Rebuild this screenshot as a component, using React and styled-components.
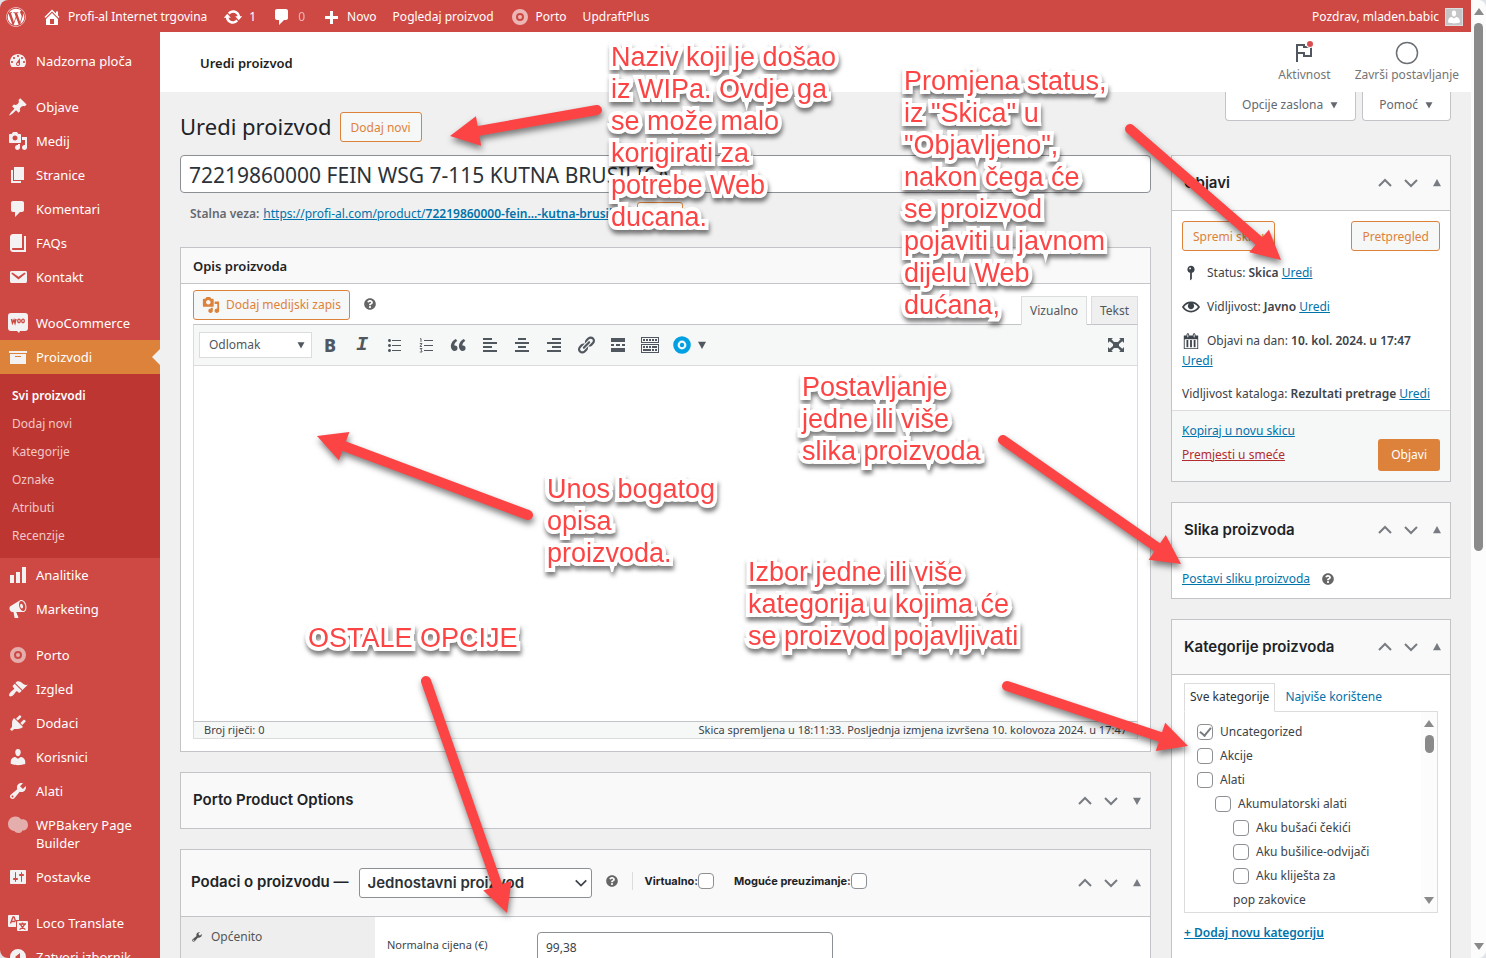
import React, { useState } from "react";
import styled, { createGlobalStyle, css } from "styled-components";
import { FaQuestionCircle, FaWordpress } from "react-icons/fa";

const paths = {
    dashboard: "M3.76 16h12.48c1.1-1.37 1.76-3.11 1.76-5 0-4.42-3.58-8-8-8s-8 3.58-8 8c0 1.89.66 3.63 1.76 5zM10 4c.55 0 1 .45 1 1s-.45 1-1 1-1-.45-1-1 .45-1 1-1zM6 6c.55 0 1 .45 1 1s-.45 1-1 1-1-.45-1-1 .45-1 1-1zm8 0c.55 0 1 .45 1 1s-.45 1-1 1-1-.45-1-1 .45-1 1-1zm-5.37 5.55L12 7v6c0 1.1-.9 2-2 2s-2-.9-2-2c0-.57.24-1.08.63-1.45zM4 10c.55 0 1 .45 1 1s-.45 1-1 1-1-.45-1-1 .45-1 1-1zm12 0c.55 0 1 .45 1 1s-.45 1-1 1-1-.45-1-1 .45-1 1-1zm-5 3c0-.55-.45-1-1-1s-1 .45-1 1 .45 1 1 1 1-.45 1-1z",
    pin: "M10.44 3.02l1.82-1.82 6.36 6.35-1.83 1.82c-1.05-.68-2.48-.57-3.41.36l-.75.75c-.92.93-1.04 2.35-.35 3.41l-1.83 1.82-2.41-2.41-2.8 2.79c-.42.42-3.38 2.71-3.8 2.29s1.86-3.39 2.28-3.81l2.79-2.79L4.1 9.36l1.83-1.82c1.05.69 2.48.57 3.4-.36l.75-.75c.93-.92 1.05-2.35.36-3.41z",
    media: "M13 11V4c0-.55-.45-1-1-1h-1.67L9 1H5L3.67 3H2c-.55 0-1 .45-1 1v7c0 .55.45 1 1 1h10c.55 0 1-.45 1-1zM7 4.5c1.38 0 2.5 1.12 2.5 2.5S8.38 9.5 7 9.5 4.5 8.38 4.5 7 5.62 4.5 7 4.5zM14 6h5v10.5c0 1.38-1.12 2.5-2.5 2.5S14 17.88 14 16.5s1.12-2.5 2.5-2.5c.17 0 .34.02.5.05V9h-3V6zm-4 8.05V13h2v3.5c0 1.38-1.12 2.5-2.5 2.5S7 17.88 7 16.5 8.12 14 9.5 14c.17 0 .34.02.5.05z",
    page: "M6 15V2h10v13H6zm-1 1h8v2H3V5h2v11z",
    comment: "M5 2h9c1.1 0 2 .9 2 2v7c0 1.1-.9 2-2 2h-2l-5 5v-5H5c-1.1 0-2-.9-2-2V4c0-1.1.9-2 2-2z",
    book: "M16 3h2v16H5c-1.66 0-3-1.34-3-3V4c0-1.66 1.34-3 3-3h9v14H5c-.55 0-1 .45-1 1s.45 1 1 1h11V3z",
    mail: "M3.87 4h13.25C18.37 4 19 4.59 19 5.79v8.42c0 1.19-.63 1.79-1.88 1.79H3.87c-1.25 0-1.88-.6-1.88-1.79V5.79c0-1.2.63-1.79 1.88-1.79zm6.62 8.6l6.74-5.53c.24-.2.43-.66.13-1.07-.29-.41-.82-.42-1.17-.17l-5.7 3.86L4.8 5.83c-.35-.25-.88-.24-1.17.17-.3.41-.11.87.13 1.07z",
    archive: "M19 4v2H1V4h18zM2 7h16v10H2V7zm11 3V9H7v1h6z",
    chart: "M18 18V2h-4v16h4zm-6 0V7H8v11h4zm-6 0v-8H2v8h4z",
    megaphone: "M18.15 5.94c.46 1.62.38 3.22-.02 4.48-.42 1.28-1.26 2.18-2.3 2.48-.16.06-.26.06-.4.06-.06.02-.12.02-.18.02-.06.02-.14.02-.22.02h-6.8l2.22 5.5c.02.14-.06.26-.14.34-.08.1-.24.16-.34.16H6.95c-.1 0-.26-.06-.34-.16-.08-.08-.16-.2-.14-.34l-1-5.5H4.25l-.02-.02c-.5.06-1.08-.18-1.54-.62s-.88-1.08-1.06-1.88c-.24-.8-.2-1.56-.02-2.2.18-.62.58-1.08 1.06-1.3l.02-.02 9-5.4c.1-.06.18-.1.24-.16.06-.04.14-.08.24-.12.16-.08.28-.12.5-.18 1.04-.3 2.24.1 3.22.98s1.84 2.24 2.26 3.86zm-2.58 5.98h-.02c.4-.1.74-.34 1.04-.7.58-.7.86-1.76.86-3.04 0-.64-.1-1.3-.28-1.98-.34-1.36-1.02-2.5-1.78-3.24s-1.68-1.1-2.46-.88c-.82.22-1.4.96-1.7 2-.32 1.04-.28 2.36.06 3.72.38 1.36 1 2.5 1.8 3.24.78.74 1.62 1.1 2.48.88zm-2.54-7.08c.22-.04.42-.02.62.04.38.16.76.48 1.02 1s.42 1.2.42 1.78c0 .3-.04.56-.12.8-.18.48-.44.84-.86.94-.34.1-.8-.06-1.14-.4s-.64-.86-.78-1.5c-.18-.62-.12-1.24.02-1.72s.48-.84.82-.94z",
    brush: "M14.48 11.06L7.41 3.99l1.5-1.5c.5-.56 2.3-.47 3.51.32 1.21.8 1.43 1.28 2.91 2.1 1.18.64 2.45 1.26 4.45.85zm-.71.71L6.7 4.7 4.93 6.47c-.39.39-.39 1.02 0 1.41l1.06 1.06c.39.39.39 1.03 0 1.42-.6.6-1.43 1.11-2.21 1.69-.35.26-.7.53-1.01.84C1.43 14.23.4 16.08 1.4 17.07c.99 1 2.84-.03 4.18-1.36.31-.31.58-.66.85-1.02.57-.78 1.08-1.61 1.69-2.21.39-.39 1.02-.39 1.41 0l1.06 1.06c.39.39 1.02.39 1.41 0z",
    plug: "M13.11 4.36L9.87 7.6 8 5.73l3.24-3.24c.35-.34 1.05-.2 1.56.32.52.51.66 1.21.31 1.55zm-8 1.77l.91-1.12 9.01 9.01-1.19.84c-.71.71-2.63 1.16-3.82 1.16H6.14L4.9 17.26c-.59.59-1.54.59-2.12 0-.59-.58-.59-1.53 0-2.12l1.24-1.24v-3.88c0-1.13.4-3.19 1.09-3.89zm7.26 3.97l3.24-3.24c.34-.35 1.04-.21 1.55.31.52.51.66 1.21.31 1.55l-3.24 3.25z",
    user: "M10 9.25c-2.27 0-2.73-3.44-2.73-3.44C7 4.02 7.82 2 9.97 2c2.16 0 2.98 2.02 2.71 3.81 0 0-.41 3.44-2.68 3.44zm0 2.57L12.72 10c2.39 0 4.52 2.33 4.52 4.53v2.49s-3.65 1.13-7.24 1.13c-3.65 0-7.24-1.13-7.24-1.13v-2.49c0-2.25 1.94-4.48 4.47-4.48z",
    wrench: "M16.68 9.77c-1.34 1.34-3.3 1.67-4.95.99l-5.41 6.52c-.99.99-2.59.99-3.58 0s-.99-2.59 0-3.57l6.52-5.42c-.68-1.65-.35-3.61.99-4.95 1.28-1.28 3.12-1.62 4.72-1.06l-2.89 2.89 2.82 2.82 2.86-2.87c.53 1.58.18 3.39-1.08 4.65zM3.81 16.21c.4.39 1.04.39 1.43 0 .4-.4.4-1.04 0-1.43-.39-.4-1.03-.4-1.43 0-.39.39-.39 1.03 0 1.43z",
    sliders: "M18 16V4c0-.55-.45-1-1-1H3c-.55 0-1 .45-1 1v12c0 .55.45 1 1 1h14c.55 0 1-.45 1-1zM8 11h1c.55 0 1 .45 1 1s-.45 1-1 1H8v1.5c0 .28-.22.5-.5.5s-.5-.22-.5-.5V13H6c-.55 0-1-.45-1-1s.45-1 1-1h1V5.5c0-.28.22-.5.5-.5s.5.22.5.5V11zm5-2h-1c-.55 0-1-.45-1-1s.45-1 1-1h1V5.5c0-.28.22-.5.5-.5s.5.22.5.5V7h1c.55 0 1 .45 1 1s-.45 1-1 1h-1v5.5c0 .28-.22.5-.5.5s-.5-.22-.5-.5V9z",
    collapse: "M10 2a8 8 0 1 0 0 16 8 8 0 0 0 0-16zm2 12l-5-4 5-4z",
    home: "M16 8.5l1.53 1.53-1.06 1.06L10 4.6l-6.47 6.49-1.06-1.06L10 2.5l4 4v-2h2v4zm-6-2.46l6 5.99V18H4v-5.97zM12 17v-5H8v5h4z",
    update: "M10.2 3.28c3.53 0 6.43 2.61 6.92 6h2.08l-3.5 4-3.5-4h2.32c-.45-1.97-2.21-3.45-4.32-3.45-1.45 0-2.73.71-3.54 1.78L4.95 5.66C6.23 4.2 8.11 3.28 10.2 3.28zm-.4 13.44c-3.52 0-6.43-2.61-6.92-6H.8l3.5-4c1.17 1.33 2.33 2.67 3.5 4H5.48c.45 1.97 2.21 3.45 4.32 3.45 1.45 0 2.73-.71 3.54-1.78l1.71 1.95c-1.28 1.46-3.15 2.38-5.25 2.38z",
    plus: "M17 9v3h-5v5H9v-5H4V9h5V4h3v5h5z",
    list: "M5.5 7C4.67 7 4 6.33 4 5.5 4 4.68 4.67 4 5.5 4 6.32 4 7 4.68 7 5.5 7 6.33 6.32 7 5.5 7zM8 5h9v1H8V5zm-2.5 7c-.83 0-1.5-.67-1.5-1.5C4 9.68 4.67 9 5.5 9c.82 0 1.5.68 1.5 1.5 0 .83-.68 1.5-1.5 1.5zM8 10h9v1H8v-1zm-2.5 7c-.83 0-1.5-.67-1.5-1.5 0-.82.67-1.5 1.5-1.5.82 0 1.5.68 1.5 1.5 0 .83-.68 1.5-1.5 1.5zM8 15h9v1H8v-1z",
    quote: "M9.49 13.22c0-.74-.2-1.38-.61-1.9-.62-.78-1.83-.88-2.53-.72-.29-1.65 1.11-3.75 2.92-4.65L7.88 4c-2.73 1.3-5.42 4.28-4.96 8.05C3.21 14.43 4.59 16 6.54 16c.85 0 1.56-.25 2.12-.75s.83-1.18.83-2.03zm8.05 0c0-.74-.2-1.38-.61-1.9-.63-.78-1.83-.88-2.53-.72-.29-1.65 1.11-3.75 2.92-4.65L15.93 4c-2.73 1.3-5.41 4.28-4.95 8.05.29 2.38 1.66 3.95 3.61 3.95.85 0 1.56-.25 2.12-.75s.83-1.18.83-2.03z",
    left: "M12 5V3H3v2h9zm5 4V7H3v2h14zm-5 4v-2H3v2h9zm5 4v-2H3v2h14z",
    center: "M14 5V3H6v2h8zm3 4V7H3v2h14zm-3 4v-2H6v2h8zm3 4v-2H3v2h14z",
    right: "M17 5V3H8v2h9zm0 4V7H3v2h14zm0 4v-2H8v2h9zm0 4v-2H3v2h14z",
    link: "M17.74 2.76c1.68 1.69 1.68 4.41 0 6.1l-1.53 1.52c-1.12 1.12-2.7 1.47-4.14 1.09l2.62-2.61.76-.77.76-.76c.84-.84.84-2.2 0-3.04-.84-.85-2.2-.85-3.04 0l-.77.76-3.38 3.38c-.37-1.44-.02-3.02 1.1-4.14l1.52-1.53c1.69-1.68 4.42-1.68 6.1 0zM8.59 13.43l5.34-5.34c.42-.42.42-1.1 0-1.52-.44-.43-1.13-.39-1.53 0l-5.33 5.34c-.42.42-.42 1.1 0 1.52.44.43 1.13.39 1.52 0zm-.76 2.29l4.14-4.15c.38 1.44.03 3.02-1.09 4.14l-1.52 1.53c-1.69 1.68-4.41 1.68-6.1 0-1.68-1.68-1.68-4.42 0-6.1l1.53-1.52c1.12-1.12 2.7-1.47 4.14-1.1l-4.14 4.15c-.85.84-.85 2.2 0 3.05.84.84 2.2.84 3.04 0z",
    more: "M17 7V3H3v4h14zM6 11V9H3v2h3zm6 0V9H8v2h4zm5 0V9h-3v2h3zm0 6v-4H3v4h14z",
    keyboard: "M19 2v6H1V2h18zm-1 5V3H2v4h16zM5 4v2H3V4h2zm3 0v2H6V4h2zm3 0v2H9V4h2zm3 0v2h-2V4h2zm3 0v2h-2V4h2zm2 5v9H1V9h18zm-1 8v-7H2v7h16zM5 11v2H3v-2h2zm3 0v2H6v-2h2zm3 0v2H9v-2h2zm6 0v2h-5v-2h5zm-6 3v2H3v-2h8zm3 0v2h-2v-2h2zm3 0v2h-2v-2h2z",
    fullscreen: "M2 3h5L5.500 4.300 8 7h4l2.500-2.700L13 3h5v5l-1.700-1.700L13 9v2l3.300 2.700L18 12v5h-5l1.500-1.300L12 13H8l-2.500 2.700L7 17H2v-5l1.700 1.700L7 11V9L3.700 6.300 2 8z",
    eye: "M19.7 9.4C17.7 6 14 3.9 10 3.9S2.3 6 .3 9.4L0 10l.3.6c2 3.4 5.7 5.5 9.7 5.5s7.7-2.1 9.7-5.5l.3-.6-.3-.6zM10 14.1c-3.1 0-6-1.6-7.7-4.1C3.6 8 5.7 6.6 8 6.1c-.9.6-1.5 1.7-1.5 2.9 0 1.9 1.6 3.5 3.5 3.5s3.5-1.6 3.5-3.5c0-1.2-.6-2.3-1.5-2.9 2.3.5 4.4 1.9 5.7 3.9-1.7 2.5-4.6 4.1-7.7 4.1z",
    status: "M14 6c0 1.86-1.28 3.41-3 3.86V16c0 1-2 2-2 2V9.86c-1.72-.45-3-2-3-3.86 0-2.21 1.79-4 4-4s4 1.79 4 4zM8 5c0 .55.45 1 1 1s1-.45 1-1-.45-1-1-1-1 .45-1 1z",
    calendar: "M15 4h3v15H2V4h3V3c0-.41.15-.76.44-1.06.29-.29.65-.44 1.06-.44s.77.15 1.06.44c.29.3.44.65.44 1.06v1h4V3c0-.41.15-.76.44-1.06.29-.29.65-.44 1.06-.44s.77.15 1.06.44c.29.3.44.65.44 1.06v1zM6 3v2.5c0 .14.05.26.15.36.09.09.21.14.35.14s.26-.05.35-.14c.1-.1.15-.22.15-.36V3c0-.14-.05-.26-.15-.35-.09-.1-.21-.15-.35-.15s-.26.05-.35.15c-.1.09-.15.21-.15.35zm7 0v2.5c0 .14.05.26.14.36.1.09.22.14.36.14s.26-.05.36-.14c.09-.1.14-.22.14-.36V3c0-.14-.05-.26-.14-.35-.1-.1-.22-.15-.36-.15s-.26.05-.36.15c-.09.09-.14.21-.14.35zm4 15V8H3v10h14zM7 9v8H5V9h2zm4 0v8H9V9h2zm4 0v8h-2V9h2z",
    triUp: "M10 5l5 9H5z",
    triDown: "M5 6h10l-5 9z",
};

const Icon = ({ name, size = 20 }) => (
    <svg width={size} height={size} viewBox="0 0 20 20" fill="currentColor" fillRule="evenodd" aria-hidden="true">
        <path d={paths[name]} />
    </svg>
);

const Ring = ({ size = 20 }) => (
    <svg width={size} height={size} viewBox="0 0 20 20" fill="none" stroke="currentColor" aria-hidden="true">
        <circle cx="10" cy="10" r="6" strokeWidth="4" />
        <circle cx="10" cy="10" r="2" fill="currentColor" stroke="none" />
    </svg>
);

const WooIcon = () => (
    <svg width="20" height="20" viewBox="0 0 20 20" aria-hidden="true">
        <path fill="currentColor" d="M3 0h14a3 3 0 0 1 3 3v12a3 3 0 0 1-3 3h-5l-1 2-2-2H3a3 3 0 0 1-3-3V3a3 3 0 0 1 3-3z" />
        <path fill="none" stroke="#cf4944" strokeWidth="1.500" d="M3.500 6l1 4 1.500-3 1 3 1-4" />
        <ellipse cx="11" cy="8" rx="1.300" ry="1.800" fill="none" stroke="#cf4944" strokeWidth="1.300" />
        <ellipse cx="15" cy="8" rx="1.300" ry="1.800" fill="none" stroke="#cf4944" strokeWidth="1.300" />
    </svg>
);

const BakeryIcon = () => (
    <svg width="20" height="20" viewBox="0 0 20 20" fill="currentColor" aria-hidden="true">
        <path d="M7.500 1.500c2.500 0 4.500 1.200 5.600 3 3.500-.8 6.900 1.300 6.900 5.500 0 3.500-2.600 5.800-5.700 5.600C14 17 12.800 18 11 18c-2.600 0-3.800-.8-4.700-2C2.500 15.600 0 12.800 0 9c0-4.400 3.300-7.500 7.500-7.500z" />
    </svg>
);

const TranslateIcon = () => (
    <svg width="20" height="20" viewBox="0 0 20 20" aria-hidden="true">
        <path fill="currentColor" d="M1 2h10v5H8v7H1a1 1 0 0 1-1-1V3a1 1 0 0 1 1-1z" />
        <rect x="9" y="8" width="11" height="10" rx="1" fill="currentColor" />
        <path fill="none" stroke="#cf4944" strokeWidth="1.300" d="M2.500 10.500L5 4h1l1.500 4M3.500 8.500h4M11 11h7M14.500 9.500V11M12.500 11.500c1 3 3 4 5 5M16.500 11.500c-1 3-3 4-5 5" />
    </svg>
);

const OrderedIcon = () => (
    <svg width="20" height="20" viewBox="0 0 20 20" fill="none" stroke="currentColor" aria-hidden="true">
        <path d="M8 5.500h9M8 10.500h9M8 15.500h9" />
        <path strokeWidth="0.900" d="M4 4l1-.5V7M3.800 8.500H6L4 11.500h2M3.800 13.500H6l-1.200 1.500L6 16v1H3.800" />
    </svg>
);

const FlagIcon = () => (
    <svg width="24" height="24" viewBox="0 0 24 24" fill="none" aria-hidden="true">
        <path stroke="#50575e" strokeWidth="2" d="M5 21V4h7v2h7v9h-7v-3H5" />
        <circle cx="18" cy="3" r="4" fill="#fff" />
        <circle cx="18" cy="3" r="3" fill="#d94f4f" />
    </svg>
);

const Chevron = ({ up, size = 16 }) => (
    <svg width={size} height={size} viewBox="0 0 16 16" fill="none" stroke="currentColor" strokeWidth="2" aria-hidden="true">
        <path d={up ? "M2 11l6-6 6 6" : "M2 5l6 6 6-6"} />
    </svg>
);

const menu = [
    { icon: "dashboard", text: "Nadzorna ploča" },
    { icon: "pin", text: "Objave", gap: true },
    { icon: "media", text: "Medij" },
    { icon: "page", text: "Stranice" },
    { icon: "comment", text: "Komentari" },
    { icon: "book", text: "FAQs" },
    { icon: "mail", text: "Kontakt" },
    { draw: WooIcon, text: "WooCommerce", gap: true },
    {
        icon: "archive",
        text: "Proizvodi",
        active: true,
        sub: ["Svi proizvodi", "Dodaj novi", "Kategorije", "Oznake", "Atributi", "Recenzije"],
    },
    { icon: "chart", text: "Analitike" },
    { icon: "megaphone", text: "Marketing" },
    { draw: Ring, text: "Porto", gap: true, faded: true },
    { icon: "brush", text: "Izgled" },
    { icon: "plug", text: "Dodaci" },
    { icon: "user", text: "Korisnici" },
    { icon: "wrench", text: "Alati" },
    { draw: BakeryIcon, text: "WPBakery Page Builder", faded: true },
    { icon: "sliders", text: "Postavke" },
    { draw: TranslateIcon, text: "Loco Translate", gap: true },
    { icon: "collapse", text: "Zatvori izbornik" },
];

const categories = [
    { text: "Uncategorized", level: 0, checked: true },
    { text: "Akcije", level: 0 },
    { text: "Alati", level: 0 },
    { text: "Akumulatorski alati", level: 1 },
    { text: "Aku bušaći čekići", level: 2 },
    { text: "Aku bušilice-odvijači", level: 2 },
    { text: "Aku kliješta za\npop zakovice", level: 2 },
];

const notes = [
    { x: 611, y: 41, lines: ["Naziv koji je došao", "iz WIPa. Ovdje ga", "se može malo", "korigirati za", "potrebe Web", "ducana."] },
    { x: 904, y: 65, lines: ["Promjena status,", "iz \"Skica\" u", "\"Objavljeno\",", "nakon čega će", "se proizvod", "pojaviti u javnom", "dijelu Web", "dućana,"] },
    { x: 802, y: 371, lines: ["Postavljanje", "jedne ili više", "slika proizvoda"] },
    { x: 547, y: 473, lines: ["Unos bogatog", "opisa", "proizvoda."] },
    { x: 308, y: 622, lines: ["OSTALE OPCIJE"] },
    { x: 748, y: 556, lines: ["Izbor jedne ili više", "kategorija u kojima će", "se proizvod pojavljivati"] },
];

// from x, from y, tip x, tip y
const arrows = [
    [597, 110, 450, 136],
    [1130, 129, 1281, 260],
    [528, 515, 317, 436],
    [426, 681, 507, 913],
    [1003, 440, 1181, 564],
    [1007, 686, 1188, 746],
];

const Arrow = ({ points }) => {
    const [x1, y1, x2, y2] = points;
    const len = Math.hypot(x2 - x1, y2 - y1);
    const ux = (x2 - x1) / len;
    const uy = (y2 - y1) / len;
    const bx = x2 - ux * 29;
    const by = y2 - uy * 29;
    return (
        <>
            <line x1={x1} y1={y1} x2={bx + ux * 4} y2={by + uy * 4} stroke="#fd4445" strokeWidth="10" strokeLinecap="round" />
            <polygon fill="#fd4445" points={`${x2},${y2} ${bx - uy * 15},${by + ux * 15} ${bx + uy * 15},${by - ux * 15}`} />
        </>
    );
};

const Handles = ({ closed }) => (
    <HandleGroup>
        <Handle type="button" aria-label="Pomakni gore"><Chevron up /></Handle>
        <Handle type="button" aria-label="Pomakni dolje"><Chevron /></Handle>
        <Handle type="button" aria-label="Prikaži ili sakrij"><Icon name={closed ? "triDown" : "triUp"} size={16} /></Handle>
    </HandleGroup>
);

const App = () => {
    const [title, setTitle] = useState("72219860000 FEIN WSG 7-115 KUTNA BRUSILICA");
    const [price, setPrice] = useState("99,38");

    return (
        <>
            <GlobalStyle />
            <Shell>
                <Site>
                    <AdminBar>
                        <BarLink href="#" aria-label="WordPress"><FaWordpress size={20} /></BarLink>
                        <BarLink href="#"><Icon name="home" />Profi-al Internet trgovina</BarLink>
                        <BarLink href="#"><Icon name="update" />1</BarLink>
                        <BarLink href="#"><Icon name="comment" /><Dim>0</Dim></BarLink>
                        <BarLink href="#"><Icon name="plus" />Novo</BarLink>
                        <BarLink href="#">Pogledaj proizvod</BarLink>
                        <BarLink href="#"><Dim><Ring /></Dim>Porto</BarLink>
                        <BarLink href="#">UpdraftPlus</BarLink>
                        <Account href="#">
                            Pozdrav, mladen.babic
                            <Avatar><Icon name="user" size={16} /></Avatar>
                        </Account>
                    </AdminBar>
                    <Body>
                        <Sidebar>
                            {menu.map(({ icon, draw: Draw, text, gap, active, sub, faded }) => (
                                <React.Fragment key={text}>
                                    <MenuLink href="#" $gap={gap} $active={active}>
                                        <MenuIcon $faded={faded}>{Draw ? <Draw /> : <Icon name={icon} />}</MenuIcon>
                                        <span>{text}</span>
                                    </MenuLink>
                                    {sub && (
                                        <SubMenu>
                                            {sub.map((s, i) => (
                                                <SubLink href="#" key={s} $current={i === 0}>{s}</SubLink>
                                            ))}
                                        </SubMenu>
                                    )}
                                </React.Fragment>
                            ))}
                        </Sidebar>
                        <Main>
                            <PageHeader>
                                <PageName>Uredi proizvod</PageName>
                                <HeaderButton type="button"><FlagIcon />Aktivnost</HeaderButton>
                                <HeaderButton type="button">
                                    <svg width="24" height="24" viewBox="0 0 24 24" aria-hidden="true">
                                        <circle cx="12" cy="12" r="10.500" fill="none" stroke="#6b7075" strokeWidth="1.500" />
                                    </svg>
                                    Završi postavljanje
                                </HeaderButton>
                            </PageHeader>
                            <Content>
                                <TopRow>
                                    <Heading>Uredi proizvod</Heading>
                                    <AddNew type="button">Dodaj novi</AddNew>
                                    <ScreenTabs>
                                        <ScreenTab type="button">Opcije zaslona<Icon name="triDown" size={14} /></ScreenTab>
                                        <ScreenTab type="button">Pomoć<Icon name="triDown" size={14} /></ScreenTab>
                                    </ScreenTabs>
                                </TopRow>
                                <Columns>
                                    <Left>
                                        <TitleInput aria-label="Naziv proizvoda" value={title} onChange={e => setTitle(e.target.value)} />
                                        <Permalink>
                                            <b>Stalna veza:</b>
                                            <a href="#">https://profi-al.com/product/<b>72219860000-fein...-kutna-brusilica</b>/</a>
                                            <SmallButton type="button">Uredi</SmallButton>
                                        </Permalink>
                                        <Panel>
                                            <PanelHead $slim>
                                                <PlainTitle>Opis proizvoda</PlainTitle>
                                            </PanelHead>
                                            <EditorWrap>
                                                <EditorTop>
                                                    <MediaButton type="button"><Icon name="media" size={18} />Dodaj medijski zapis</MediaButton>
                                                    <Help><FaQuestionCircle size={12} /></Help>
                                                    <EditorTabs>
                                                        <EditorTab type="button" $on>Vizualno</EditorTab>
                                                        <EditorTab type="button">Tekst</EditorTab>
                                                    </EditorTabs>
                                                </EditorTop>
                                                <Editor>
                                                    <Toolbar>
                                                        <FormatBox>
                                                            <FormatSelect aria-label="Format odlomka">
                                                                <option>Odlomak</option>
                                                            </FormatSelect>
                                                            <SelectMark><Icon name="triDown" size={14} /></SelectMark>
                                                        </FormatBox>
                                                        <Tool type="button"><BoldMark>B</BoldMark></Tool>
                                                        <Tool type="button"><ItalicMark>I</ItalicMark></Tool>
                                                        <Tool type="button" aria-label="Popis"><Icon name="list" /></Tool>
                                                        <Tool type="button" aria-label="Numerirani popis"><OrderedIcon /></Tool>
                                                        {["quote", "left", "center", "right", "link", "more", "keyboard"].map(n => (
                                                            <Tool type="button" key={n} aria-label={n}><Icon name={n} /></Tool>
                                                        ))}
                                                        <PortoTool type="button" aria-label="Porto">
                                                            <Ring size={22} />
                                                            <Icon name="triDown" size={16} />
                                                        </PortoTool>
                                                        <FullTool type="button" aria-label="Cijeli zaslon"><Icon name="fullscreen" /></FullTool>
                                                    </Toolbar>
                                                    <Writing aria-label="Opis proizvoda" />
                                                    <StatusBar>
                                                        <span>Broj riječi: 0</span>
                                                        <span>Skica spremljena u 18:11:33. Posljednja izmjena izvršena 10. kolovoza 2024. u 17:47</span>
                                                    </StatusBar>
                                                </Editor>
                                            </EditorWrap>
                                        </Panel>
                                        <Panel>
                                            <PanelHead>
                                                <PanelTitle $raised>Porto Product Options</PanelTitle>
                                                <Handles closed />
                                            </PanelHead>
                                        </Panel>
                                        <Panel>
                                            <PanelHead $tall>
                                                <PanelTitle $raised>Podaci o proizvodu —</PanelTitle>
                                                <TypeBox>
                                                    <TypeSelect aria-label="Vrsta proizvoda">
                                                        <option>Jednostavni proizvod</option>
                                                    </TypeSelect>
                                                    <SelectMark><Chevron size={14} /></SelectMark>
                                                </TypeBox>
                                                <Help $raised><FaQuestionCircle size={12} /></Help>
                                                <Options>
                                                    <OptionLabel>Virtualno:<Check type="checkbox" /></OptionLabel>
                                                    <OptionLabel>Moguće preuzimanje:<Check type="checkbox" /></OptionLabel>
                                                </Options>
                                                <Handles />
                                            </PanelHead>
                                            <ProductData>
                                                <DataTabs>
                                                    <DataTab href="#"><Icon name="wrench" size={12} />Općenito</DataTab>
                                                </DataTabs>
                                                <Field>
                                                    <label htmlFor="price">Normalna cijena (€)</label>
                                                    <PriceInput id="price" value={price} onChange={e => setPrice(e.target.value)} />
                                                </Field>
                                            </ProductData>
                                        </Panel>
                                    </Left>
                                    <Right>
                                        <Panel>
                                            <PanelHead $side>
                                                <PanelTitle>Objavi</PanelTitle>
                                                <Handles />
                                            </PanelHead>
                                            <PublishBody>
                                                <ButtonRow>
                                                    <OutlineButton type="button">Spremi skicu</OutlineButton>
                                                    <OutlineButton type="button">Pretpregled</OutlineButton>
                                                </ButtonRow>
                                                <Misc><Icon name="status" size={18} /><span>Status: <b>Skica</b> <a href="#">Uredi</a></span></Misc>
                                                <Misc><Icon name="eye" size={18} /><span>Vidljivost: <b>Javno</b> <a href="#">Uredi</a></span></Misc>
                                                <Misc><Icon name="calendar" size={18} /><span>Objavi na dan: <b>10. kol. 2024. u 17:47</b></span></Misc>
                                                <DateEdit><a href="#">Uredi</a></DateEdit>
                                                <Catalog>Vidljivost kataloga: <b>Rezultati pretrage</b> <a href="#">Uredi</a></Catalog>
                                            </PublishBody>
                                            <PublishFoot>
                                                <FootLinks>
                                                    <a href="#">Kopiraj u novu skicu</a>
                                                    <Trash href="#">Premjesti u smeće</Trash>
                                                </FootLinks>
                                                <Primary type="button">Objavi</Primary>
                                            </PublishFoot>
                                        </Panel>
                                        <Panel>
                                            <PanelHead $side>
                                                <PanelTitle>Slika proizvoda</PanelTitle>
                                                <Handles />
                                            </PanelHead>
                                            <ImageBody>
                                                <a href="#">Postavi sliku proizvoda</a>
                                                <FaQuestionCircle size={12} />
                                            </ImageBody>
                                        </Panel>
                                        <Panel>
                                            <PanelHead $side>
                                                <PanelTitle>Kategorije proizvoda</PanelTitle>
                                                <Handles />
                                            </PanelHead>
                                            <CatBody>
                                                <CatTabs>
                                                    <CatTab type="button" $on>Sve kategorije</CatTab>
                                                    <CatTab type="button">Najviše korištene</CatTab>
                                                </CatTabs>
                                                <CatBox>
                                                    <CatList>
                                                        {categories.map(c => (
                                                            <CatItem key={c.text} $level={c.level}>
                                                                <label><Check type="checkbox" defaultChecked={c.checked} />{c.text}</label>
                                                            </CatItem>
                                                        ))}
                                                    </CatList>
                                                    <MiniScroll>
                                                        <ScrollUp />
                                                        <Thumb $size={18} />
                                                        <Spacer />
                                                        <ScrollDown />
                                                    </MiniScroll>
                                                </CatBox>
                                                <AddCategory href="#">+ Dodaj novu kategoriju</AddCategory>
                                            </CatBody>
                                        </Panel>
                                    </Right>
                                </Columns>
                            </Content>
                        </Main>
                    </Body>
                </Site>
                <PageScroll>
                    <ScrollUp />
                    <LongThumb />
                    <Spacer />
                    <ScrollDown />
                </PageScroll>
                <Overlay>
                    <ArrowLayer aria-hidden="true">
                        {arrows.map(a => <Arrow key={a.join()} points={a} />)}
                    </ArrowLayer>
                    {notes.map(n => (
                        <Note key={n.lines[0]} $x={n.x} $y={n.y}>
                            {n.lines.map(l => <div key={l}>{l}</div>)}
                        </Note>
                    ))}
                </Overlay>
            </Shell>
        </>
    );
};

export default App;

const GlobalStyle = createGlobalStyle`
    * {
        box-sizing: border-box;
    }
    body {
        margin: 0;
        background: #dfe3e8;
        color: #3c434a;
        font-family: "Noto Sans", "Open Sans", sans-serif;
        font-size: 12px;
        line-height: 20px;
    }
    a {
        color: #0073aa;
    }
    b {
        font-weight: 600;
    }
    button, input, select, textarea {
        font: inherit;
        color: inherit;
    }
    button {
        cursor: pointer;
    }
    svg {
        flex: none;
        display: block;
    }
`;
const Shell = styled.div`
    position: relative;
    display: flex;
    height: 100vh;
    overflow: hidden;
    border-radius: 8px;
    background: #f0f0f1;
`;
const Site = styled.div`
    flex: 1;
    min-width: 0;
    display: flex;
    flex-direction: column;
`;
const AdminBar = styled.nav`
    flex: none;
    display: flex;
    align-items: center;
    gap: 16px;
    height: 32px;
    padding: 1px 8px 0 6px;
    background: #cf4944;
`;
const BarLink = styled.a`
    display: flex;
    align-items: center;
    gap: 6px;
    color: #fff;
    text-decoration: none;
    white-space: nowrap;
`;
const Account = styled(BarLink)`
    margin-left: auto;
`;
const Dim = styled.span`
    opacity: .6;
`;
const Avatar = styled.span`
    background: #c5c5c5;
    border: 1px solid #ddd;
`;
const Body = styled.div`
    flex: 1;
    min-height: 0;
    display: flex;
`;
const Sidebar = styled.nav`
    flex: none;
    width: 160px;
    padding-top: 12px;
    background: #cf4944;
    overflow: hidden;
`;
const MenuLink = styled.a`
    position: relative;
    display: flex;
    gap: 8px;
    margin-top: ${p => (p.$gap ? "12px" : "0")};
    padding: 8px;
    color: #fff;
    font-size: 13px;
    line-height: 18px;
    text-decoration: none;
    background: ${p => (p.$active ? "#dd823b" : "transparent")};

    ${p => p.$active && css`
        &::after {
            content: "";
            position: absolute;
            right: 0;
            top: 9px;
            border: 8px solid transparent;
            border-right-color: #f0f0f1;
            border-left-width: 0;
        }
    `}
`;
const MenuIcon = styled.span`
    flex: none;
    height: 18px;
    display: flex;
    align-items: center;
    color: #f3f1f1;
    opacity: ${p => (p.$faded ? ".6" : "1")};
`;
const SubMenu = styled.div`
    display: flex;
    flex-direction: column;
    padding: 8px 0;
    background: #be3631;
`;
const SubLink = styled.a`
    padding: 0 12px;
    line-height: 28px;
    text-decoration: none;
    color: ${p => (p.$current ? "#fff" : "#f1c8c7")};
    font-weight: ${p => (p.$current ? "600" : "400")};
`;
const Main = styled.main`
    flex: 1;
    min-width: 0;
`;
const PageHeader = styled.header`
    display: flex;
    align-items: center;
    gap: 24px;
    height: 60px;
    padding: 2px 12px 0 40px;
    background: #fff;
`;
const PageName = styled.div`
    flex: 1;
    color: #1e1e1e;
    font-size: 13px;
    font-weight: 600;
`;
const HeaderButton = styled.button`
    display: flex;
    flex-direction: column;
    align-items: center;
    padding: 0;
    border: 0;
    background: none;
    color: #757575;
`;
const Content = styled.div`
    padding: 0 20px;
`;
const TopRow = styled.div`
    display: flex;
    align-items: flex-start;
    gap: 8px;
    height: 63px;
`;
const Heading = styled.h1`
    margin: 19px 0 0;
    color: #1d2327;
    font-size: 22px;
    font-weight: 400;
    line-height: 30px;
`;
const OutlineButton = styled.button`
    height: 30px;
    padding: 1px 10px 0;
    border: 1px solid #dd823b;
    border-radius: 3px;
    background: #f6f7f7;
    color: #dd823b;
    white-space: nowrap;
`;
const AddNew = styled(OutlineButton)`
    margin-top: 20px;
`;
const ScreenTabs = styled.div`
    display: flex;
    gap: 6px;
    margin-left: auto;
`;
const ScreenTab = styled.button`
    display: flex;
    align-items: center;
    gap: 4px;
    height: 29px;
    padding: 0 14px 2px 16px;
    border: 1px solid #c3c4c7;
    border-top: 0;
    border-radius: 0 0 4px 4px;
    background: #fff;
    color: #646970;
`;
const Columns = styled.div`
    display: flex;
    align-items: flex-start;
    gap: 20px;
`;
const Left = styled.div`
    flex: 1;
    min-width: 0;
`;
const Right = styled.div`
    flex: none;
    width: 280px;
`;
const TitleInput = styled.input`
    display: block;
    width: 100%;
    height: 38px;
    padding: 2px 8px 0;
    border: 1px solid #8c8f94;
    border-radius: 4px;
    background: #fff;
    color: #2c3338;
    font-size: 21px;
`;
const Permalink = styled.div`
    display: flex;
    align-items: center;
    gap: 4px;
    height: 40px;
    margin-bottom: 14px;
    padding: 1px 10px 0;
    color: #646970;
    white-space: nowrap;
`;
const SmallButton = styled(OutlineButton)`
    height: 24px;
    padding: 0 8px;
    font-size: 11px;
`;
const Panel = styled.section`
    margin-bottom: 20px;
    border: 1px solid #c3c4c7;
    background: #fff;
`;
const PanelHead = styled.div`
    display: flex;
    align-items: center;
    height: ${p => (p.$slim ? "36px" : p.$tall ? "67px" : "55px")};
    padding-left: ${p => (p.$tall ? "10px" : "12px")};
    background: #f9f9f9;
    border-bottom: ${p => (p.$slim || p.$tall || p.$side ? "1px solid #c3c4c7" : "0")};
`;
const PanelTitle = styled.h2`
    margin: 0;
    padding-bottom: ${p => (p.$raised ? "2px" : "0")};
    color: #1d2327;
    font-family: Inter, "Open Sans", sans-serif;
    font-size: 15px;
    font-weight: 600;
    white-space: nowrap;
`;
const PlainTitle = styled.h2`
    margin: 0;
    color: #1d2327;
    font-size: 13px;
    font-weight: 600;
`;
const HandleGroup = styled.div`
    display: flex;
    margin-left: auto;
`;
const Handle = styled.button`
    display: flex;
    align-items: center;
    justify-content: center;
    width: 26px;
    height: 36px;
    padding: 0;
    border: 0;
    background: none;
    color: #787c82;
`;
const EditorWrap = styled.div`
    padding: 6px 12px 12px;
`;
const EditorTop = styled.div`
    display: flex;
    align-items: flex-start;
    height: 34px;
`;
const MediaButton = styled(OutlineButton)`
    display: flex;
    align-items: center;
    gap: 6px;
    padding: 0 8px;
`;
const Help = styled.span`
    padding: 8px 14px;
    margin-bottom: ${p => (p.$raised ? "4px" : "0")};
    color: #666;
`;
const EditorTabs = styled.div`
    display: flex;
    align-self: flex-end;
    gap: 4px;
    margin-left: auto;
`;
const EditorTab = styled.button`
    position: relative;
    height: 29px;
    margin-bottom: -1px;
    padding: 0 8px;
    border: 1px solid #dcdcde;
    border-bottom-color: ${p => (p.$on ? "#f6f7f7" : "#c3c4c7")};
    background: ${p => (p.$on ? "#f6f7f7" : "#efefef")};
    color: #50575e;
`;
const Editor = styled.div`
    border: 1px solid #dcdcde;
    border-top-color: #c3c4c7;
`;
const Toolbar = styled.div`
    display: flex;
    align-items: center;
    height: 41px;
    padding: 0 5px;
    border-bottom: 1px solid #dcdcde;
    background: #f6f7f7;
    color: #50575e;
`;
const FormatBox = styled.div`
    position: relative;
    width: 113px;
    margin-right: 2px;
`;
const FormatSelect = styled.select`
    display: block;
    appearance: none;
    width: 100%;
    height: 26px;
    padding: 0 9px;
    border: 1px solid #dcdcde;
    background: #fff;
`;
const SelectMark = styled.span`
    position: absolute;
    right: 4px;
    top: 0;
    bottom: 0;
    display: flex;
    align-items: center;
    pointer-events: none;
`;
const Tool = styled.button`
    display: flex;
    align-items: center;
    justify-content: center;
    width: 32px;
    height: 30px;
    padding: 0;
    border: 0;
    background: none;
`;
const BoldMark = styled.span`
    font-size: 18px;
    font-weight: 800;
`;
const ItalicMark = styled.span`
    font-family: "Liberation Mono", monospace;
    font-size: 20px;
    font-style: italic;
    font-weight: 700;
`;
const PortoTool = styled(Tool)`
    width: 48px;
    gap: 1px;

    svg:first-child {
        color: #00a0e3;
    }
`;
const FullTool = styled(Tool)`
    margin-left: auto;
`;
const Writing = styled.textarea`
    display: block;
    width: 100%;
    height: 355px;
    padding: 10px;
    border: 0;
    resize: none;
    outline: 0;
`;
const StatusBar = styled.div`
    display: flex;
    justify-content: space-between;
    padding: 0 10px;
    border-top: 1px solid #c3c4c7;
    background: #f6f7f7;
    font-size: 11px;
    line-height: 16px;
`;
const TypeBox = styled.div`
    position: relative;
    width: 233px;
    margin-left: 10px;
`;
const TypeSelect = styled.select`
    display: block;
    appearance: none;
    width: 100%;
    height: 30px;
    padding: 0 8px;
    border: 1px solid #8c8f94;
    border-radius: 3px;
    background: #fff;
    color: #2c3338;
    font-family: Inter, "Open Sans", sans-serif;
    font-size: 15px;
    font-weight: 600;
`;
const Options = styled.div`
    display: flex;
    gap: 20px;
    margin-bottom: 4px;
    padding-left: 12px;
    border-left: 1px solid #dcdcde;
`;
const OptionLabel = styled.label`
    display: flex;
    align-items: center;
    color: #1d2327;
    font-family: Inter, "Open Sans", sans-serif;
    font-size: 11px;
    font-weight: 700;
    line-height: 18px;
`;
const Check = styled.input`
    appearance: none;
    flex: none;
    display: inline-grid;
    place-content: center;
    width: 16px;
    height: 16px;
    margin: 0;
    border: 1px solid #8c8f94;
    border-radius: 4px;
    background: #fff;
    vertical-align: middle;

    &:checked::before {
        content: "";
        width: 5px;
        height: 9px;
        margin-bottom: 2px;
        border: solid #787c82;
        border-width: 0 2px 2px 0;
        transform: rotate(40deg);
    }
`;
const ProductData = styled.div`
    display: flex;
    min-height: 300px;
`;
const DataTabs = styled.div`
    flex: none;
    width: 194px;
    background: #eee;
`;
const DataTab = styled.a`
    display: flex;
    align-items: center;
    gap: 8px;
    padding: 10px;
    color: #555;
    text-decoration: none;
`;
const Field = styled.div`
    flex: 1;
    display: flex;
    align-items: flex-start;
    padding: 15px 12px;

    label {
        width: 150px;
        padding-top: 3px;
        font-size: 11px;
    }
`;
const PriceInput = styled.input`
    width: 296px;
    height: 30px;
    padding: 0 8px;
    border: 1px solid #8c8f94;
    border-radius: 4px;
`;
const PublishBody = styled.div`
    padding: 10px 10px 6px;
`;
const ButtonRow = styled.div`
    display: flex;
    justify-content: space-between;
    margin-bottom: 5px;
`;
const Misc = styled.div`
    display: flex;
    align-items: center;
    gap: 7px;
    height: 34px;
    white-space: nowrap;
`;
const DateEdit = styled.div`
    margin-top: -7px;
`;
const Catalog = styled.div`
    margin-top: 13px;
    white-space: nowrap;
`;
const PublishFoot = styled.div`
    display: flex;
    align-items: flex-end;
    justify-content: space-between;
    padding: 8px 10px 10px;
    border-top: 1px solid #dcdcde;
    background: #f6f7f7;
`;
const FootLinks = styled.div`
    display: flex;
    flex-direction: column;
    line-height: 24px;
    padding-bottom: 4px;
`;
const Trash = styled.a`
    color: #b32d2e;
`;
const Primary = styled.button`
    height: 32px;
    padding: 0 13px;
    border: 0;
    border-radius: 3px;
    background: #dd823b;
    color: #fff;
`;
const ImageBody = styled.div`
    display: flex;
    align-items: center;
    gap: 12px;
    padding: 11px 10px 9px;
    color: #666;
`;
const CatBody = styled.div`
    padding: 8px 12px 42px;
`;
const CatTabs = styled.div`
    display: flex;
    gap: 4px;
`;
const CatTab = styled.button`
    position: relative;
    height: 29px;
    margin-bottom: -1px;
    padding: 0 5px 2px;
    border: 1px solid ${p => (p.$on ? "#dcdcde" : "transparent")};
    border-bottom-color: ${p => (p.$on ? "#fff" : "transparent")};
    background: ${p => (p.$on ? "#fff" : "none")};
    color: ${p => (p.$on ? "#2c3338" : "#0073aa")};
    white-space: nowrap;
`;
const CatBox = styled.div`
    display: flex;
    height: 202px;
    border: 1px solid #dcdcde;
`;
const CatList = styled.ul`
    flex: 1;
    margin: 0;
    padding: 8px 12px 0;
    list-style: none;
    overflow: hidden;
`;
const CatItem = styled.li`
    padding-left: ${p => p.$level * 18}px;
    line-height: 24px;
    white-space: pre-line;

    input {
        margin: -2px 7px 0 0;
    }
`;
const MiniScroll = styled.div`
    display: flex;
    flex-direction: column;
    align-items: center;
    width: 16px;
    padding: 8px 0;
    background: #fcfcfc;
`;
const ScrollUp = styled.div`
    border: solid transparent;
    border-width: 0 5px 7px;
    border-bottom-color: #8a8a8a;
`;
const ScrollDown = styled.div`
    border: solid transparent;
    border-width: 7px 5px 0;
    border-top-color: #8a8a8a;
`;
const Thumb = styled.div`
    width: 9px;
    height: ${p => p.$size}px;
    margin-top: 8px;
    border-radius: 5px;
    background: #8a8a8a;
`;
const LongThumb = styled(Thumb)`
    height: 56%;
`;
const Spacer = styled.div`
    flex: 1;
`;
const PageScroll = styled(MiniScroll)`
    flex: none;
    width: 15px;
`;
const AddCategory = styled.a`
    display: block;
    margin-top: 10px;
    font-weight: 600;
`;
const Overlay = styled.div`
    position: absolute;
    inset: 0;
    pointer-events: none;
`;
const ArrowLayer = styled.svg`
    width: 100%;
    height: 100%;
    filter: drop-shadow(1px 4px 3px rgba(0, 0, 0, .5));
`;
const Note = styled.div`
    position: absolute;
    left: ${p => p.$x}px;
    top: ${p => p.$y}px;
    color: #fd4445;
    font-family: "Liberation Sans", Arial, sans-serif;
    font-size: 27px;
    line-height: 32px;
    white-space: nowrap;
    -webkit-text-stroke: 8px #fff;
    paint-order: stroke fill;
    stroke-linejoin: round;
    filter: drop-shadow(1px 4px 2px rgba(0, 0, 0, .5));
`;
